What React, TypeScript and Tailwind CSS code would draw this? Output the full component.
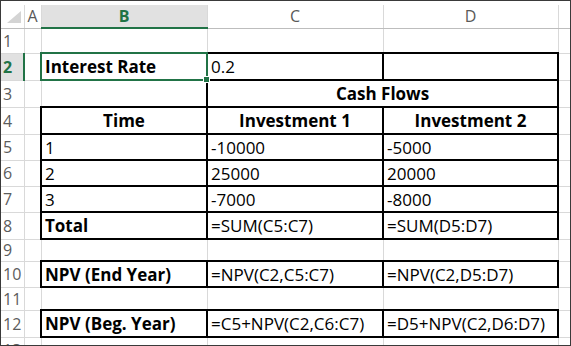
import React from "react";

const G = "border border-[#d9d9d9]";
const RH =
  "border border-[#d9d9d9] border-l-0 text-[#5c5c5c] text-[16px] pl-[2px] text-left align-middle";
const B = "border-2 border-black px-[3px] whitespace-nowrap overflow-hidden align-middle";

function RowHead({ n, sel }: { n: number; sel?: boolean }) {
  if (sel)
    return (
      <td className="border border-[#d9d9d9] border-l-0 border-r-2 border-r-[#217346] bg-[#e1e1e1] text-[#217346] font-bold text-[16px] pl-[2px] text-left align-middle">
        {n}
      </td>
    );
  return <td className={RH}>{n}</td>;
}

export default function App() {
  return (
    <div className="w-[571px] h-[346px] overflow-hidden border border-[#3a3a3a] bg-white pt-[4px] font-['Open_Sans',sans-serif] text-black">
      <table className="table-fixed border-collapse w-[569px] text-[17px] leading-none">
        <colgroup>
          <col className="w-[23px]" />
          <col className="w-[17px]" />
          <col className="w-[166px]" />
          <col className="w-[176px]" />
          <col className="w-[175px]" />
          <col className="w-[12px]" />
        </colgroup>
        <tbody>
          <tr className="h-[23px] text-[16px] text-[#595959]">
            <td className="border-r border-r-[#d9d9d9] border-b border-b-[#bdbdbd] p-0 align-bottom">
              <div className="flex justify-end items-end h-[22px] pr-[3px] pb-[5px]">
                <svg width="14" height="12" viewBox="0 0 14 12">
                  <polygon points="14,0 14,12 0,12" fill="#d4d4d4" />
                </svg>
              </div>
            </td>
            <td className="text-center border-r border-r-[#d9d9d9] border-b border-b-[#bdbdbd]">A</td>
            <td className="text-center bg-[#e1e1e1] text-[#217346] font-bold border-r border-r-[#d9d9d9] border-b-2 border-b-[#217346]">
              B
            </td>
            <td className="text-center border-r border-r-[#d9d9d9] border-b border-b-[#bdbdbd]">C</td>
            <td className="text-center border-r border-r-[#d9d9d9] border-b border-b-[#bdbdbd]">D</td>
            <td className="border-b border-b-[#bdbdbd]"></td>
          </tr>

          <tr className="h-[25px]">
            <RowHead n={1} />
            <td className={G}></td>
            <td className={G}></td>
            <td className={G}></td>
            <td className={G}></td>
            <td className={G}></td>
          </tr>

          <tr className="h-[27px]">
            <RowHead n={2} sel />
            <td className={G}></td>
            <td className="relative border-2 border-[#217346] px-[3px] font-bold whitespace-nowrap align-middle">
              Interest Rate
              <span className="absolute -right-[4px] -bottom-[4px] w-[7px] h-[7px] bg-[#217346] border border-white" />
            </td>
            <td className={B}>0.2</td>
            <td className={B}></td>
            <td className={G}></td>
          </tr>

          <tr className="h-[27px]">
            <RowHead n={3} />
            <td className={G}></td>
            <td className={G}></td>
            <td colSpan={2} className={`${B} text-center font-bold`}>
              Cash Flows
            </td>
            <td className={G}></td>
          </tr>

          <tr className="h-[27px]">
            <RowHead n={4} />
            <td className={G}></td>
            <td className={`${B} text-center font-bold`}>Time</td>
            <td className={`${B} text-center font-bold`}>Investment 1</td>
            <td className={`${B} text-center font-bold`}>Investment 2</td>
            <td className={G}></td>
          </tr>

          {[
            [5, "1", "-10000", "-5000"],
            [6, "2", "25000", "20000"],
            [7, "3", "-7000", "-8000"],
          ].map(([n, a, b, c]) => (
            <tr key={n} className="h-[26px]">
              <RowHead n={n as number} />
              <td className={G}></td>
              <td className={B}>{a}</td>
              <td className={B}>{b}</td>
              <td className={B}>{c}</td>
              <td className={G}></td>
            </tr>
          ))}

          <tr className="h-[27px]">
            <RowHead n={8} />
            <td className={G}></td>
            <td className={`${B} font-bold`}>Total</td>
            <td className={B}>=SUM(C5:C7)</td>
            <td className={B}>=SUM(D5:D7)</td>
            <td className={G}></td>
          </tr>

          <tr className="h-[22px]">
            <RowHead n={9} />
            <td className={G}></td>
            <td className={G}></td>
            <td className={G}></td>
            <td className={G}></td>
            <td className={G}></td>
          </tr>

          <tr className="h-[26px]">
            <RowHead n={10} />
            <td className={G}></td>
            <td className={`${B} font-bold`}>NPV (End Year)</td>
            <td className={B}>=NPV(C2,C5:C7)</td>
            <td className={B}>=NPV(C2,D5:D7)</td>
            <td className={G}></td>
          </tr>

          <tr className="h-[23px]">
            <RowHead n={11} />
            <td className={G}></td>
            <td className={G}></td>
            <td className={G}></td>
            <td className={G}></td>
            <td className={G}></td>
          </tr>

          <tr className="h-[27px]">
            <RowHead n={12} />
            <td className={G}></td>
            <td className={`${B} font-bold`}>NPV (Beg. Year)</td>
            <td className={B}>=C5+NPV(C2,C6:C7)</td>
            <td className={B}>=D5+NPV(C2,D6:D7)</td>
            <td className={G}></td>
          </tr>

          <tr className="h-[26px]">
            <RowHead n={13} />
            <td className={G}></td>
            <td className={G}></td>
            <td className={G}></td>
            <td className={G}></td>
            <td className={G}></td>
          </tr>
        </tbody>
      </table>
    </div>
  );
}
